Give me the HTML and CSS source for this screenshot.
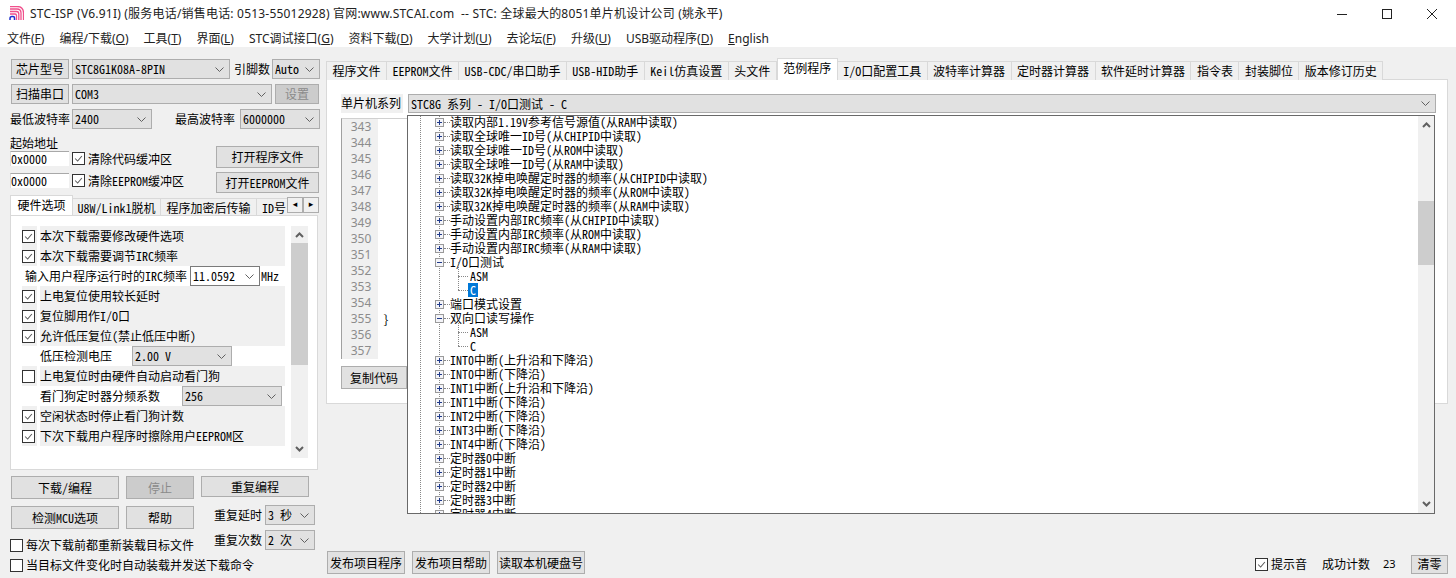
FILE: index.html
```html
<!DOCTYPE html>
<html lang="zh-CN">
<head>
<meta charset="utf-8">
<title>STC-ISP</title>
<link rel="stylesheet" href="styles.css">
</head>
<body>
<svg class="defs" width="0" height="0" aria-hidden="true">
  <symbol id="chev" viewBox="0 0 9 5"><path d="M.5 .5 4.500 4.500 8.500 .5" fill="none" stroke="#606060"/></symbol>
  <symbol id="tick" viewBox="0 0 13 13"><path d="M2.5 6.5 5.5 9.5 10.5 3.5" fill="none" stroke="#5a5a5a" stroke-width="1.2"/></symbol>
  <symbol id="plus" viewBox="0 0 9 9"><rect x=".5" y=".5" width="8" height="8" fill="#f4f4f8" stroke="#9a9a9a"/><path d="M2 4.5H7M4.5 2V7" stroke="#1f3a8a"/></symbol>
  <symbol id="minus" viewBox="0 0 9 9"><rect x=".5" y=".5" width="8" height="8" fill="#f4f4f8" stroke="#9a9a9a"/><path d="M2 4.5H7" stroke="#1f3a8a"/></symbol>
  <symbol id="sup" viewBox="0 0 9 6"><path d="M1 5 4.500 1.500 8 5" fill="none" stroke="#606060" stroke-width="2"/></symbol>
  <symbol id="sdn" viewBox="0 0 9 6"><path d="M1 1 4.500 4.500 8 1" fill="none" stroke="#606060" stroke-width="2"/></symbol>
</svg>

<header class="titlebar">
  <svg class="logo" viewBox="0 0 15 15" width="15" height="15">
    <g fill="none" stroke="#f0508c" stroke-width="1.300">
      <path d="M1 .5H8Q14.500 .5 14.500 7V14"/>
      <path d="M1 3H8Q12 3 12 7V14"/>
      <path d="M1 5.500H7.500Q9.800 5.500 9.800 8V14"/>
      <path d="M1 8H6Q7.500 8 7.500 9.500V14"/>
    </g>
    <path d="M1 14V12.500Q1 10.500 3 10.500H4Q5.500 10.500 5.500 12V14" fill="none" stroke="#2030d0" stroke-width="1.500"/>
  </svg>
  <span class="title-text">STC-ISP (V6.91I) (服务电话/销售电话: 0513-55012928) 官网:www.STCAI.com  -- STC: 全球最大的8051单片机设计公司 (姚永平)</span>
  <div class="winctl">
    <svg width="10" height="10" viewBox="0 0 10 10"><path d="M0 5.500H10" stroke="#222"/></svg>
    <svg width="10" height="10" viewBox="0 0 10 10"><rect x=".5" y=".5" width="9" height="9" fill="none" stroke="#222"/></svg>
    <svg width="10" height="10" viewBox="0 0 10 10"><path d="M0 0 10 10M10 0 0 10" stroke="#222"/></svg>
  </div>
</header>

<nav class="menubar">
  <span>文件(<u>F</u>)</span><span>编程/下载(<u>O</u>)</span><span>工具(<u>T</u>)</span><span>界面(<u>L</u>)</span><span>STC调试接口(<u>G</u>)</span><span>资料下载(<u>D</u>)</span><span>大学计划(<u>U</u>)</span><span>去论坛(<u>F</u>)</span><span>升级(<u>U</u>)</span><span>USB驱动程序(<u>D</u>)</span><span><u>E</u>nglish</span>
</nav>

<main class="main">
  <section class="left">
    <div class="row r1">
      <button class="btn b-chip">芯片型号</button>
      <div class="combo c-chip"><span>STC8G1K08A-8PIN</span><svg class="chev"><use href="#chev"/></svg></div>
      <span class="lbl l-pin">引脚数</span>
      <div class="combo c-auto"><span>Auto</span><svg class="chev"><use href="#chev"/></svg></div>
    </div>
    <div class="row r2">
      <button class="btn b-chip">扫描串口</button>
      <div class="combo c-com"><span>COM3</span><svg class="chev"><use href="#chev"/></svg></div>
      <button class="btn off b-set">设置</button>
    </div>
    <div class="row r3">
      <span class="lbl l-min">最低波特率</span>
      <div class="combo c-baud1"><span>2400</span><svg class="chev"><use href="#chev"/></svg></div>
      <span class="lbl l-max">最高波特率</span>
      <div class="combo c-baud2"><span>6000000</span><svg class="chev"><use href="#chev"/></svg></div>
    </div>

    <div class="addr">
      <div class="addr-l">
        <div class="lbl addr-title">起始地址</div>
        <div class="addr-row">
          <span class="hexin">0x0000</span>
          <span class="cb"><svg><use href="#tick"/></svg></span>
          <span class="lbl">清除代码缓冲区</span>
        </div>
        <div class="addr-row second">
          <span class="hexin">0x0000</span>
          <span class="cb"><svg><use href="#tick"/></svg></span>
          <span class="lbl">清除EEPROM缓冲区</span>
        </div>
      </div>
      <div class="addr-r">
        <button class="btn b-open1">打开程序文件</button>
        <button class="btn b-open2">打开EEPROM文件</button>
      </div>
    </div>

    <div class="ltabs">
      <span class="ltab active">硬件选项</span>
      <span class="ltab t-u8w">U8W/Link1脱机</span>
      <span class="ltab t-enc">程序加密后传输</span>
      <span class="ltab last">ID号</span>
      <span class="arrow">◂</span><span class="arrow">▸</span>
    </div>
    <div class="lpanel">
      <div class="opts">
        <div class="opt"><span class="cb-cell"><span class="cb"><svg><use href="#tick"/></svg></span></span><span class="opt-t">本次下载需要修改硬件选项</span></div>
        <div class="opt"><span class="cb-cell"><span class="cb"><svg><use href="#tick"/></svg></span></span><span class="opt-t">本次下载需要调节IRC频率</span></div>
        <div class="opt plain irc"><span class="lbl l-irc">输入用户程序运行时的IRC频率</span>
          <div class="combo c-irc"><span>11.0592</span><svg class="chev"><use href="#chev"/></svg></div><span class="lbl">MHz</span></div>
        <div class="opt"><span class="cb-cell"><span class="cb"><svg><use href="#tick"/></svg></span></span><span class="opt-t">上电复位使用较长延时</span></div>
        <div class="opt"><span class="cb-cell"><span class="cb"><svg><use href="#tick"/></svg></span></span><span class="opt-t">复位脚用作I/O口</span></div>
        <div class="opt"><span class="cb-cell"><span class="cb"><svg><use href="#tick"/></svg></span></span><span class="opt-t">允许低压复位(禁止低压中断)</span></div>
        <div class="opt plain sub"><span class="lbl l-lv">低压检测电压</span>
          <div class="combo c-lv"><span>2.00 V</span><svg class="chev"><use href="#chev"/></svg></div></div>
        <div class="opt"><span class="cb-cell"><span class="cb"></span></span><span class="opt-t">上电复位时由硬件自动启动看门狗</span></div>
        <div class="opt plain sub"><span class="lbl l-wd">看门狗定时器分频系数</span>
          <div class="combo c-lv"><span>256</span><svg class="chev"><use href="#chev"/></svg></div></div>
        <div class="opt"><span class="cb-cell"><span class="cb"><svg><use href="#tick"/></svg></span></span><span class="opt-t">空闲状态时停止看门狗计数</span></div>
        <div class="opt"><span class="cb-cell"><span class="cb"><svg><use href="#tick"/></svg></span></span><span class="opt-t">下次下载用户程序时擦除用户EEPROM区</span></div>
      </div>
      <div class="vscroll vs-left">
        <svg class="sarrow"><use href="#sup"/></svg>
        <div class="thumb th-left"></div>
        <svg class="sarrow end"><use href="#sdn"/></svg>
      </div>
    </div>

    <div class="actions">
      <div class="act-col1">
        <button class="btn b-dl">下载/编程</button>
        <button class="btn off b-stop">停止</button>
        <button class="btn b-rep">重复编程</button>
      </div>
      <div class="act-col2">
        <div class="act-left">
          <div class="act-btns">
            <button class="btn b-chk">检测MCU选项</button>
            <button class="btn b-help">帮助</button>
          </div>
          <div class="chkline first"><span class="cb"></span><span class="lbl">每次下载前都重新装载目标文件</span></div>
          <div class="chkline"><span class="cb"></span><span class="lbl">当目标文件变化时自动装载并发送下载命令</span></div>
        </div>
        <div class="act-right">
          <div class="rep"><span class="lbl">重复延时</span><div class="combo c-rep"><span>3 秒</span><svg class="chev"><use href="#chev"/></svg></div></div>
          <div class="rep"><span class="lbl">重复次数</span><div class="combo c-rep"><span>2 次</span><svg class="chev"><use href="#chev"/></svg></div></div>
        </div>
      </div>
    </div>
  </section>

  <section class="right">
    <div class="rtabs">
      <span class="rtab">程序文件</span><span class="rtab">EEPROM文件</span><span class="rtab">USB-CDC/串口助手</span><span class="rtab">USB-HID助手</span><span class="rtab">Keil仿真设置</span><span class="rtab">头文件</span><span class="rtab active">范例程序</span><span class="rtab">I/O口配置工具</span><span class="rtab">波特率计算器</span><span class="rtab">定时器计算器</span><span class="rtab">软件延时计算器</span><span class="rtab">指令表</span><span class="rtab">封装脚位</span><span class="rtab">版本修订历史</span>
    </div>
    <div class="rpanel">
      <div class="series">
        <span class="series-l">单片机系列</span>
        <div class="combo c-series"><span>STC8G 系列 - I/O口测试 - C</span><svg class="chev"><use href="#chev"/></svg></div>
      </div>
      <div class="editor">
        <div class="gutter">
          <span>343</span><span>344</span><span>345</span><span>346</span><span>347</span><span>348</span><span>349</span><span>350</span><span>351</span><span>352</span><span>353</span><span>354</span><span>355</span><span>356</span><span>357</span>
        </div>
        <div class="code"><span class="brace">}</span></div>
      </div>
      <button class="btn b-copy">复制代码</button>
    </div>
    <div class="bottom">
      <div class="pub">
        <button class="btn b-pub">发布项目程序</button>
        <button class="btn b-pub">发布项目帮助</button>
        <button class="btn b-pub wide">读取本机硬盘号</button>
      </div>
      <div class="stat">
        <span class="cb"><svg><use href="#tick"/></svg></span>
        <span class="lbl l-snd">提示音</span>
        <span class="lbl l-cnt">成功计数</span>
        <span class="num">23</span>
        <button class="btn b-clr">清零</button>
      </div>
    </div>
  </section>
</main>

<div class="tree">
  <div class="guide g1"></div>
  <div class="guide g2"></div>
  <div class="rows">
    <div class="node"><svg class="ex"><use href="#plus"/></svg><i></i><span>读取内部1.19V参考信号源值(从RAM中读取)</span></div>
    <div class="node"><svg class="ex"><use href="#plus"/></svg><i></i><span>读取全球唯一ID号(从CHIPID中读取)</span></div>
    <div class="node"><svg class="ex"><use href="#plus"/></svg><i></i><span>读取全球唯一ID号(从ROM中读取)</span></div>
    <div class="node"><svg class="ex"><use href="#plus"/></svg><i></i><span>读取全球唯一ID号(从RAM中读取)</span></div>
    <div class="node"><svg class="ex"><use href="#plus"/></svg><i></i><span>读取32K掉电唤醒定时器的频率(从CHIPID中读取)</span></div>
    <div class="node"><svg class="ex"><use href="#plus"/></svg><i></i><span>读取32K掉电唤醒定时器的频率(从ROM中读取)</span></div>
    <div class="node"><svg class="ex"><use href="#plus"/></svg><i></i><span>读取32K掉电唤醒定时器的频率(从RAM中读取)</span></div>
    <div class="node"><svg class="ex"><use href="#plus"/></svg><i></i><span>手动设置内部IRC频率(从CHIPID中读取)</span></div>
    <div class="node"><svg class="ex"><use href="#plus"/></svg><i></i><span>手动设置内部IRC频率(从ROM中读取)</span></div>
    <div class="node"><svg class="ex"><use href="#plus"/></svg><i></i><span>手动设置内部IRC频率(从RAM中读取)</span></div>
    <div class="node"><svg class="ex"><use href="#minus"/></svg><i></i><span>I/O口测试</span></div>
    <div class="leaf"><b></b><span>ASM</span></div>
    <div class="leaf tail"><b></b><span class="sel">C</span></div>
    <div class="node"><svg class="ex"><use href="#plus"/></svg><i></i><span>端口模式设置</span></div>
    <div class="node"><svg class="ex"><use href="#minus"/></svg><i></i><span>双向口读写操作</span></div>
    <div class="leaf"><b></b><span>ASM</span></div>
    <div class="leaf tail"><b></b><span>C</span></div>
    <div class="node"><svg class="ex"><use href="#plus"/></svg><i></i><span>INT0中断(上升沿和下降沿)</span></div>
    <div class="node"><svg class="ex"><use href="#plus"/></svg><i></i><span>INT0中断(下降沿)</span></div>
    <div class="node"><svg class="ex"><use href="#plus"/></svg><i></i><span>INT1中断(上升沿和下降沿)</span></div>
    <div class="node"><svg class="ex"><use href="#plus"/></svg><i></i><span>INT1中断(下降沿)</span></div>
    <div class="node"><svg class="ex"><use href="#plus"/></svg><i></i><span>INT2中断(下降沿)</span></div>
    <div class="node"><svg class="ex"><use href="#plus"/></svg><i></i><span>INT3中断(下降沿)</span></div>
    <div class="node"><svg class="ex"><use href="#plus"/></svg><i></i><span>INT4中断(下降沿)</span></div>
    <div class="node"><svg class="ex"><use href="#plus"/></svg><i></i><span>定时器0中断</span></div>
    <div class="node"><svg class="ex"><use href="#plus"/></svg><i></i><span>定时器1中断</span></div>
    <div class="node"><svg class="ex"><use href="#plus"/></svg><i></i><span>定时器2中断</span></div>
    <div class="node"><svg class="ex"><use href="#plus"/></svg><i></i><span>定时器3中断</span></div>
    <div class="node"><svg class="ex"><use href="#plus"/></svg><i></i><span>定时器4中断</span></div>
  </div>
  <div class="vscroll vs-tree">
    <svg class="sarrow"><use href="#sup"/></svg>
    <div class="thumb th-tree"></div>
    <svg class="sarrow end"><use href="#sdn"/></svg>
  </div>
</div>
</body>
</html>
```
FILE: styles.css
```css
* { box-sizing: border-box; }
html, body { margin: 0; padding: 0; }
body {
  width: 1456px; height: 578px; overflow: hidden; position: relative;
  background: #f0f0f0; color: #000;
  font: 12px/14px "Noto Sans CJK SC", "Liberation Sans", sans-serif;
  font-feature-settings: "hwid";
}
.defs { position: absolute; }
button { font: inherit; font-feature-settings: inherit; color: inherit; margin: 0; padding: 0; cursor: default; }

.titlebar { height: 30px; background: #fff; display: flex; align-items: center; padding: 0 0 3px 9px; white-space: pre; }
.titlebar, .menubar { font-family: "Noto Sans", "Noto Sans CJK SC", sans-serif; font-feature-settings: normal; }
.logo { flex: none; margin: 0 6px 0 0; }
.title-text { color: #222; flex: 1; letter-spacing: .2px; }
.winctl { display: flex; gap: 35px; padding-right: 19px; }
.menubar { height: 17px; background: #fff; display: flex; gap: 15px; padding-left: 7px; line-height: 17px; color: #222; }
.main { display: flex; height: 531px; }

.left { width: 326px; flex: none; padding: 12px 0 0 10px; }
.row { display: flex; align-items: center; height: 20px; }
.r1 { padding-left: 1px; }
.r2 { margin-top: 5px; padding-left: 1px; }
.r3 { margin-top: 5px; }
.lbl { white-space: nowrap; }
.l-pin { margin: 0 2px 0 4px; width: 36px; }
.l-min { width: 62px; }
.l-max { margin: 0 6px 0 23px; width: 59px; }
.btn { background: #e1e1e1; border: 1px solid #adadad; display: block; white-space: nowrap; text-align: center; }
.btn.off { background: #ccc; color: #8a8a8a; }
.b-chip { width: 58px; height: 20px; margin-right: 3px; }
.b-set { width: 44px; height: 20px; margin-left: 3px; }
.combo { height: 20px; background: #e1e1e1; border: 1px solid #adadad; display: flex; align-items: center; justify-content: space-between; padding: 0 5px 0 2px; white-space: pre; flex: none; }
.chev { width: 9px; height: 5px; flex: none; }
.c-chip { width: 158px; }
.c-auto { width: 48px; }
.c-com { width: 200px; }
.c-baud1 { width: 80px; }
.c-baud2 { width: 80px; }

.addr { display: flex; height: 58px; margin-top: 7px; }
.addr-l { width: 206px; }
.addr-title { height: 15px; }
.addr-row { display: flex; align-items: center; height: 15px; }
.addr-row.second { margin-top: 7px; }
.hexin { width: 59px; height: 15px; background: #fff; border-top: 1px solid #a8a8a8; border-left: 1px solid #ddd; line-height: 14px; margin-right: 3px; }
.addr-r { padding-top: 10px; }
.b-open1 { width: 103px; height: 22px; }
.b-open2 { width: 103px; height: 21px; margin-top: 4px; }
.cb { width: 13px; height: 13px; border: 1px solid #333; background: #fff; display: block; flex: none; margin-right: 3px; }
.cb svg { display: block; width: 11px; height: 11px; }

.ltabs { display: flex; align-items: flex-end; height: 20px; margin-top: 1px; width: 309px; overflow: hidden; position: relative; }
.ltab { height: 17px; line-height: 17px; background: #f0f0f0; border-top: 1px solid #d9d9d9; border-right: 1px solid #d9d9d9; white-space: nowrap; flex: none; text-align: center; }
.ltab.active { height: 20px; line-height: 18px; background: #fff; border: 1px solid #d9d9d9; border-bottom: 0; width: 63px; }
.t-u8w { width: 88px; }
.t-enc { width: 96px; }
.ltab.last { width: 30px; overflow: hidden; padding-left: 5px; border-right: 0; text-align: left; }
.arrow { width: 16px; height: 16px; margin-bottom: 2px; background: #f0f0f0; border: 1px solid #adadad; font: 9px/13px "DejaVu Sans", sans-serif; text-align: center; flex: none; }
.lpanel { width: 308px; height: 255px; background: #fff; border: 1px solid #d9d9d9; display: flex; padding: 10px 0 0 11px; position: relative; }
.opts { width: 263px; flex: none; }
.opt { height: 20px; display: flex; align-items: center; }
.cb-cell { width: 15px; height: 20px; background: #f0f0f0; margin-right: 3px; display: flex; align-items: center; flex: none; }
.opt-t { flex: 1; height: 20px; line-height: 20px; background: #f0f0f0; white-space: nowrap; }
.opt.plain { background: #fff; }
.irc { padding-left: 3px; }
.l-irc { width: 165px; }
.c-irc { width: 70px; background: #fff; border-color: #7a7a7a; margin-right: 1px; }
.sub { padding-left: 18px; }
.l-lv { width: 92px; }
.l-wd { width: 142px; }
.c-lv { width: 100px; }
.vscroll { background: #f0f0f0; position: relative; display: flex; flex-direction: column; align-items: center; flex: none; }
.sarrow { width: 9px; height: 6px; display: block; flex: none; margin: 6px 0 0; }
.sarrow.end { margin: auto 0 6px; }
.vs-left { width: 17px; height: 232px; margin-left: 6px; }
.th-left { width: 17px; height: 122px; margin-top: 5px; background: #cdcdcd; }

.actions { padding: 6px 0 0 1px; }
.act-col1 { display: flex; align-items: flex-start; }
.b-dl { width: 108px; height: 23px; margin-right: 7px; }
.b-stop { width: 68px; height: 23px; margin-right: 7px; }
.b-rep { width: 108px; height: 21px; }
.act-col2 { display: flex; margin-top: 7px; }
.act-left { width: 203px; }
.act-btns { display: flex; gap: 7px; }
.b-chk { width: 108px; height: 23px; }
.b-help { width: 68px; height: 23px; }
.chkline { display: flex; align-items: center; height: 20px; margin-left: -1px; white-space: nowrap; position: relative; }
.chkline.first { margin-top: 6px; }
.act-right { margin-top: -1px; }
.rep { display: flex; align-items: center; height: 20px; gap: 3px; margin-bottom: 5px; }
.c-rep { width: 50px; }

.right { width: 1130px; flex: none; display: flex; flex-direction: column; position: relative; }
.rtabs { display: flex; align-items: flex-end; height: 33px; position: relative; z-index: 1; margin-bottom: -1px; }
.rtab { height: 19px; line-height: 18px; padding: 0 5.470px; border-top: 1px solid #d9d9d9; border-right: 1px solid #d9d9d9; background: #f0f0f0; white-space: nowrap; flex: none; }
.rtab:first-child { border-left: 1px solid #d9d9d9; }
.rtab.active { height: 22px; line-height: 18px; background: #fff; border: 1px solid #d9d9d9; border-bottom: 0; }
.rpanel { width: 1122px; height: 325px; background: #fff; border: 1px solid #d9d9d9; padding: 14px 0 0 14px; }
.series { display: flex; align-items: center; gap: 5px; height: 19px; }
.series-l { width: 62px; height: 19px; line-height: 18px; background: #f0f0f0; }
.c-series { width: 1028px; height: 19px; padding-left: 2px; }
.editor { display: flex; height: 241px; margin-top: 5px; border-left: 1px solid #a0a0a0; border-top: 1px solid #d0d0d0; width: 67px; }
.gutter { width: 36px; background: #f0f0f0; display: flex; flex-direction: column; align-items: center; padding-left: 2px; color: #8c8c8c; font-family: "Noto Sans", sans-serif; font-feature-settings: normal; flex: none; }
.gutter span { height: 16px; line-height: 16px; }
.code { flex: none; padding: 192px 0 0 5px; }
.brace { line-height: 16px; }
.b-copy { width: 66px; height: 23px; margin-top: 7px; }

.bottom { margin-top: auto; display: flex; justify-content: space-between; height: 27px; padding: 0 8px 4px 0; align-items: flex-start; }
.pub { display: flex; gap: 7px; padding-left: 1px; }
.b-pub { width: 78px; height: 23px; }
.b-pub.wide { width: 88px; }
.stat { display: flex; align-items: center; height: 20px; margin-top: 3px; }
.l-snd { margin-right: 15px; }
.num { width: 41px; padding-left: 13px; font-size: 11px; font-family: "Noto Sans", sans-serif; font-feature-settings: normal; }
.b-clr { width: 37px; height: 19px; }

.tree { position: absolute; left: 407px; top: 115px; width: 1028px; height: 399px; background: #fff; border: 1px solid #696969; overflow: hidden; display: flex; justify-content: flex-end; z-index: 2; }
.guide { position: absolute; top: 0; bottom: 0; width: 1px; border-left: 1px dotted #888; }
.g1 { left: 12px; }
.g2 { left: 31px; }
.rows { position: absolute; left: 0; top: -1px; right: 16px; }
.node, .leaf { height: 14px; line-height: 14px; display: flex; align-items: center; white-space: nowrap; position: relative; }
.node { padding-left: 27px; }
.ex { width: 9px; height: 9px; flex: none; display: block; position: relative; }
.node i { width: 6px; height: 1px; border-top: 1px dotted #888; flex: none; }
.leaf { padding-left: 50px; }
.leaf b { width: 10px; border-top: 1px dotted #888; flex: none; margin-right: 2px; }
.leaf::before { content: ""; position: absolute; left: 50px; top: -7px; height: 14px; border-left: 1px dotted #888; }
.sel { background: #0078d7; color: #fff; width: 10px; text-align: center; margin-left: -2px; height: 14px; }
.vs-tree { width: 16px; height: 397px; }
.th-tree { width: 16px; height: 64px; margin-top: 73px; background: #cdcdcd; }
```
